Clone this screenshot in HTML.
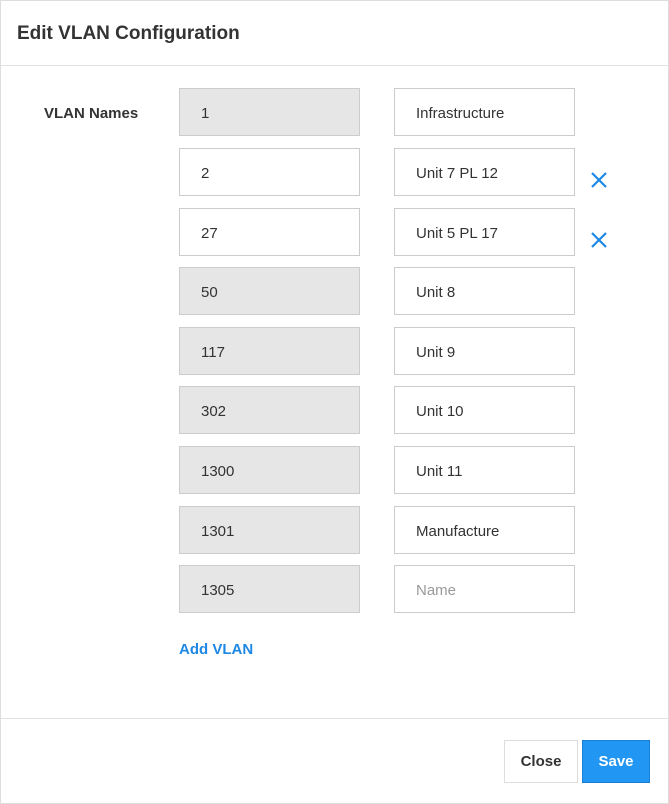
<!DOCTYPE html>
<html><head><style>
*{box-sizing:border-box;margin:0;padding:0}
body{width:669px;height:804px;background:#fff;font-family:"Liberation Sans",Arial,sans-serif;position:relative;overflow:hidden}
.frame{position:absolute;left:0;top:0;width:669px;height:804px;border:1px solid #ddd}
.title{position:absolute;left:17px;top:23px;font-size:19px;font-weight:bold;color:#333}
.hl{position:absolute;left:1px;right:1px;height:1px;background:#e2e2e2}
.lbl{position:absolute;left:44px;top:105px;font-size:15px;font-weight:bold;color:#333}
.box{position:absolute;width:181px;height:48px;border:1px solid #ccc;font-size:15px;color:#333;padding-left:21px;line-height:49px}
.g{background:#e6e6e6}
.ph{color:#999}
.x{position:absolute;left:590px;width:18px;height:18px}
.add{position:absolute;left:179px;top:641px;font-size:15px;font-weight:bold;color:#1e88e5}
.btn{position:absolute;top:740px;height:43px;font-size:15px;font-weight:bold;text-align:center;line-height:41px}
</style></head><body>
<div class="frame"></div>
<div class="title">Edit VLAN Configuration</div>
<div class="hl" style="top:65px"></div>
<div class="lbl">VLAN Names</div>

<div class="box g" style="left:179px;top:88px">1</div><div class="box" style="left:394px;top:88px">Infrastructure</div>
<div class="box" style="left:179px;top:148px">2</div><div class="box" style="left:394px;top:148px">Unit 7 PL 12</div>
<div class="box" style="left:179px;top:208px">27</div><div class="box" style="left:394px;top:208px">Unit 5 PL 17</div>
<div class="box g" style="left:179px;top:267px">50</div><div class="box" style="left:394px;top:267px">Unit 8</div>
<div class="box g" style="left:179px;top:327px">117</div><div class="box" style="left:394px;top:327px">Unit 9</div>
<div class="box g" style="left:179px;top:386px">302</div><div class="box" style="left:394px;top:386px">Unit 10</div>
<div class="box g" style="left:179px;top:446px">1300</div><div class="box" style="left:394px;top:446px">Unit 11</div>
<div class="box g" style="left:179px;top:506px">1301</div><div class="box" style="left:394px;top:506px">Manufacture</div>
<div class="box g" style="left:179px;top:565px">1305</div><div class="box ph" style="left:394px;top:565px">Name</div>

<svg class="x" style="top:171px" viewBox="0 0 18 18"><path d="M2 2L16 16M16 2L2 16" stroke="#1e88e5" stroke-width="2.2"/></svg>
<svg class="x" style="top:231px" viewBox="0 0 18 18"><path d="M2 2L16 16M16 2L2 16" stroke="#1e88e5" stroke-width="2.2"/></svg>

<div class="add">Add VLAN</div>
<div class="hl" style="top:718px"></div>
<div class="btn" style="left:504px;width:74px;border:1px solid #ddd;color:#333;background:#fff">Close</div>
<div class="btn" style="left:582px;width:68px;border:1px solid #1a7fd6;color:#fff;background:#2196f3">Save</div>
</body></html>
